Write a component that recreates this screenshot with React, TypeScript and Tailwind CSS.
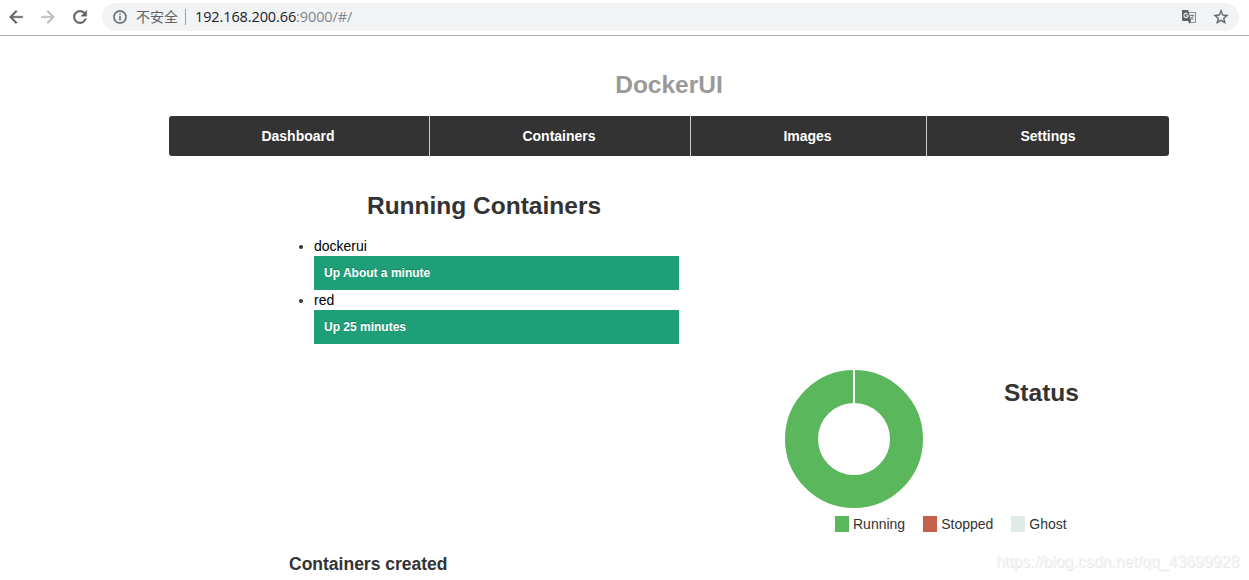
import React from 'react';
import {
  MdArrowBack,
  MdArrowForward,
  MdRefresh,
  MdInfoOutline,
  MdStarBorder,
} from 'react-icons/md';

const containers = [
  { name: 'dockerui', status: 'Up About a minute' },
  { name: 'red', status: 'Up 25 minutes' },
];

function TranslateIcon() {
  return (
    <svg width="16" height="16" viewBox="0 0 16 16" fill="none">
      <path d="M6.5 3.5H14.5V13.5H8.5L7 11" stroke="#8a8d91" />
      <path d="M1 1H7.2L10.2 12H2A1 1 0 0 1 1 11Z" fill="#5f6368" />
      <path d="M10 12L8.2 15L7.4 12Z" fill="#5f6368" />
      <path d="M6.6 5.1A2.1 2.1 0 1 0 7.1 6.8H5.2" stroke="#f1f3f4" strokeWidth="1.1" />
      <path d="M9 6.5H13.3M11 5.3V6.5M12.5 6.5C12 8.5 11 9.7 9.7 10.7M10 8L12.8 11.2" stroke="#777a7e" strokeWidth="0.9" />
    </svg>
  );
}

function BrowserBar() {
  return (
    <div className="flex h-9 items-start border-b border-[#aeaeae] bg-white pr-[10px] text-[#5f6368]">
      <div className="flex h-[34px] w-[102px] shrink-0 items-center gap-3 pl-[6px] [&_path[fill=none]]:stroke-none">
        <MdArrowBack size={20} className="stroke-[#5f6368] stroke-[0.5]" />
        <MdArrowForward size={20} className="stroke-[#babcbe] stroke-[0.5] text-[#babcbe]" />
        <MdRefresh size={20} className="stroke-[#5f6368] stroke-[0.5]" />
      </div>
      <div className="mt-[3px] flex h-7 flex-1 items-center rounded-full bg-[#f1f3f4] pr-[9px] pl-[10px]">
        <MdInfoOutline size={16} className="stroke-[#5f6368] stroke-[0.3] [&_path[fill=none]]:stroke-none" />
        <span className="-mt-[2px] ml-2 font-['Noto_Sans_CJK_SC',sans-serif] text-[14px] leading-5">不安全</span>
        <span className="ml-[7px] h-4 w-px bg-[#9aa0a6]" />
        <span className="ml-[9px] flex-1 font-['Open_Sans',sans-serif] text-[14.5px] leading-5 tracking-[-0.11px] text-[#80868b]">
          <span className="text-[#202124]">192.168.200.66</span>:9000/#/
        </span>
        <TranslateIcon />
        <MdStarBorder size={18} className="ml-[15px] stroke-[#5f6368] stroke-[0.3] [&_path[fill=none]]:stroke-none" />
      </div>
    </div>
  );
}

function Navigation() {
  return (
    <nav className="mt-[11px] flex h-10 overflow-hidden rounded-[3px] bg-[#333] text-center text-[14px] leading-10 font-bold text-white">
      <a className="w-[261px] border-r border-[#ccc] pr-[2px]">Dashboard</a>
      <a className="w-[261px] border-r border-[#ccc] pr-[2px]">Containers</a>
      <a className="w-[236px] border-r border-[#ccc] pr-[2px]">Images</a>
      <a className="flex-1">Settings</a>
    </nav>
  );
}

function LegendItem({ color, label }: { color: string; label: string }) {
  return (
    <li className="flex items-center gap-1">
      <span className={`h-4 w-[14px] ${color}`} />
      {label}
    </li>
  );
}

export default function App() {
  return (
    <div className="relative h-[580px] w-[1249px] overflow-hidden bg-white font-['Liberation_Sans',Arial,sans-serif] text-[14px] leading-5 text-[#333]">
      <BrowserBar />
      <main className="ml-[169px] w-[1000px] pt-[29px]">
        <h3 className="text-center text-[24.5px] leading-10 font-bold text-[#999]">DockerUI</h3>
        <Navigation />
        <section className="ml-[120px] w-[390px] pt-[30px]">
          <h3 className="text-center text-[24.5px] leading-10 font-bold">Running Containers</h3>
          <ul className="mt-[10px] ml-[25px] list-disc">
            {containers.map((c) => (
              <li key={c.name}>
                <a className="text-black">{c.name}</a>
                <div className="h-[34px] bg-[#1f9f78] pl-[10px] text-[12px] leading-[34px] font-bold text-white [text-shadow:0_-1px_0_rgba(0,0,0,0.25)]">
                  {c.status}
                </div>
              </li>
            ))}
          </ul>
        </section>
        <section className="mt-[26px] ml-[616px] flex h-[146px] items-start">
          <svg width="138" height="138" viewBox="0 0 138 138" fill="none">
            <circle cx="69" cy="69" r="52.5" stroke="#5bb75b" strokeWidth="33" />
            <path d="M69 0V36" stroke="#fff" strokeWidth="2" />
          </svg>
          <h3 className="mt-[3px] ml-[81px] text-[24.5px] leading-10 font-bold">Status</h3>
        </section>
        <ul className="ml-[666px] flex h-4 gap-[18px] leading-4">
          <LegendItem color="bg-[#5bb75b]" label="Running" />
          <LegendItem color="bg-[#c7604c]" label="Stopped" />
          <LegendItem color="bg-[#e1e9e9]" label="Ghost" />
        </ul>
        <h4 className="mt-[22px] ml-[120px] text-[17.5px] leading-5 font-bold">Containers created</h4>
      </main>
      <span className="absolute top-[552px] right-[10px] text-[16px] leading-5 tracking-[-0.07px] text-[#f6f6f6] [text-shadow:1px_1px_1px_#e4e4e4]">
        https://blog.csdn.net/qq_43699928
      </span>
    </div>
  );
}
